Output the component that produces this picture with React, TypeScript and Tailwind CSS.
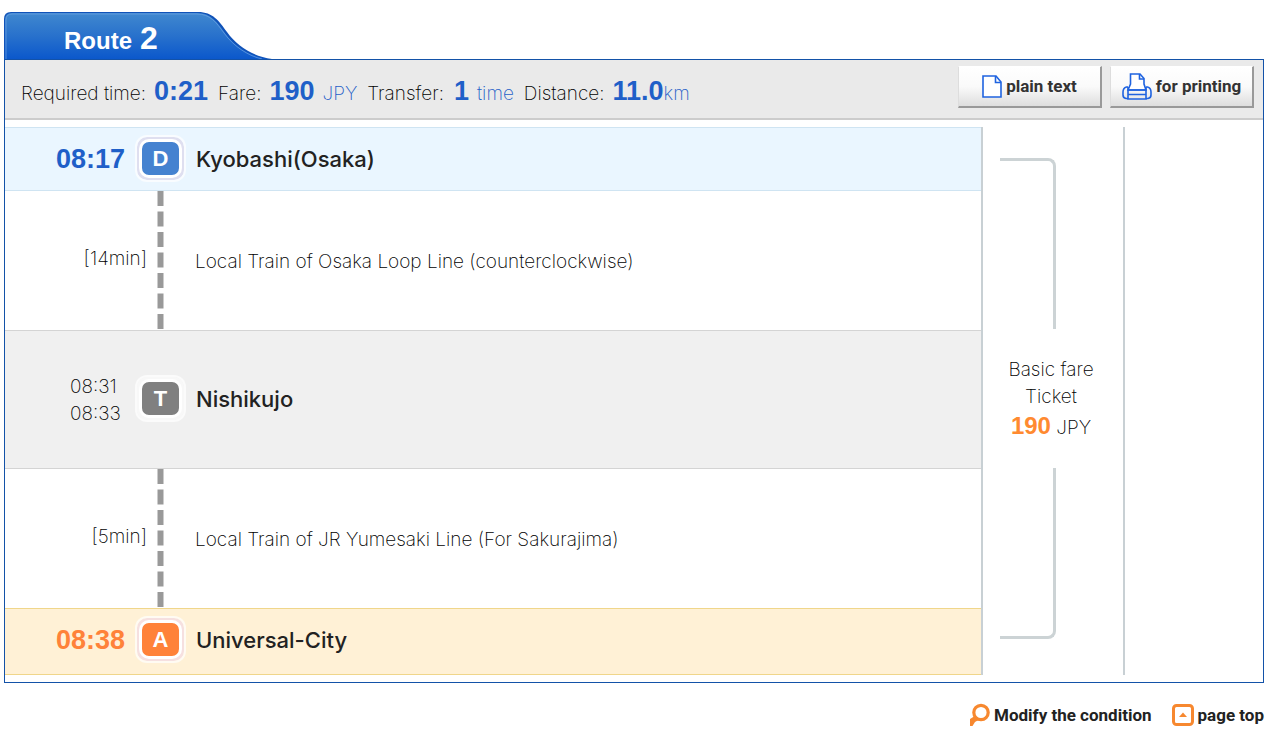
import type { ReactNode } from "react";

function RouteTab() {
  return (
    <div className="relative h-[47px] w-[268px]">
      <svg viewBox="0 0 268 47" className="absolute inset-0 h-full w-full" aria-hidden="true">
        <defs>
          <linearGradient id="tab" x1="0" y1="0" x2="0" y2="1">
            <stop offset="0" stopColor="#4088cf" />
            <stop offset="0.5" stopColor="#2871cc" />
            <stop offset="1" stopColor="#0b58cc" />
          </linearGradient>
        </defs>
        <path
          d="M0 47V7Q0 0 7 0H194C209 0 215 9 223 20C233 34 248 44 268 47Z"
          fill="#1052b8"
        />
        <path
          d="M1 47V8Q1 1 8 1H193C207 1 213 10 221 21C231 35 246 44 263 47Z"
          fill="url(#tab)"
        />
        <path
          d="M2 47V8Q2 2 8 2H193C206 2 212 10 220 21C230 35 245 44 258 47"
          fill="none"
          stroke="#6da4e4"
          strokeOpacity="0.7"
        />
      </svg>
      <h2 className="relative flex items-baseline gap-2 pt-2 pl-[60px] font-['Liberation_Sans',sans-serif] text-2xl leading-[36px] font-bold text-white">
        Route <span className="text-[32px]">2</span>
      </h2>
    </div>
  );
}

function PageIcon() {
  return (
    <svg width="20" height="23" viewBox="0 0 20 23" fill="none" aria-hidden="true">
      <path d="M1 1H14L19 7V22H1Z" fill="#fff" stroke="#1f63e0" strokeWidth="1.6" />
      <path d="M13.5 1V7.5H19" stroke="#1f63e0" strokeWidth="1.6" />
    </svg>
  );
}

function PrinterIcon() {
  return (
    <svg width="30" height="27" viewBox="0 0 30 27" fill="none" stroke="#1f63e0" strokeWidth="1.6" aria-hidden="true">
      <path d="M6 17L8.5 11V1H18L22 5.5V11L24 17Z" fill="#fff" />
      <path d="M17.5 1V6H22" />
      <path d="M6 14H4.5Q1 15 1 19V22Q1 25 4 25.5H6M24 14H25.5Q29 15 29 19V22Q29 25 26 25.5H24" />
      <path d="M6 14V26H24V14M6 17H24M6 21.5H24" />
    </svg>
  );
}

function SearchIcon() {
  return (
    <svg width="20" height="24" viewBox="0 0 20 24" fill="none" aria-hidden="true">
      <circle cx="11" cy="9.5" r="7.2" stroke="#f7882f" strokeWidth="3.2" />
      <path d="M0 16L4 13.5L8.5 17L5 19L2.5 23H0Z" fill="#f7882f" />
    </svg>
  );
}

function TopIcon() {
  return (
    <svg width="22" height="22" viewBox="0 0 22 22" fill="none" aria-hidden="true">
      <rect x="1.5" y="1.5" width="19" height="19" rx="3" stroke="#f7882f" strokeWidth="3" />
      <path d="M7 13L11 8.5L15 13Z" fill="#f7882f" />
    </svg>
  );
}

function ToolButton({ icon, children }: { icon: ReactNode; children: ReactNode }) {
  return (
    <button
      type="button"
      className="flex h-[42px] w-36 items-center justify-center gap-1 border border-r-2 border-b-2 border-t-white border-r-[#999] border-b-[#999] border-l-[#ddd] bg-linear-to-b from-white via-[#fafafa] to-[#dedede] font-['Roboto',sans-serif] text-[17px] font-bold whitespace-nowrap text-[#333]"
    >
      {icon}
      {children}
    </button>
  );
}

function Num({ children }: { children: ReactNode }) {
  return (
    <b className="font-['Liberation_Sans',sans-serif] text-[27px] font-bold text-[#1f5fc8]">{children}</b>
  );
}

// outer white edge, tinted halo, white edge, tile
function Badge({ letter, color, halo }: { letter: string; color: string; halo: string }) {
  return (
    <span className={`rounded-xl border-2 border-white/70 bg-clip-padding p-0.5 ${halo}`}>
      <span
        className={`flex h-[39px] w-[43px] items-center justify-center rounded-[10px] border-3 border-white font-['Liberation_Sans',sans-serif] text-[22px] font-bold text-white ${color}`}
      >
        {letter}
      </span>
    </span>
  );
}

interface StationProps {
  time: ReactNode;
  name: string;
  badge: ReactNode;
  className: string;
}

function Station({ time, name, badge, className }: StationProps) {
  return (
    <li className={`flex items-center ${className}`}>
      <div className="w-[120px] text-right">{time}</div>
      <div className="flex w-[71px] justify-center pb-0.5">{badge}</div>
      <div className="text-[22px] font-medium text-[#222]">{name}</div>
    </li>
  );
}

function Leg({ duration, line }: { duration: string; line: string }) {
  return (
    <li className="flex h-[139px] items-center">
      <div className="w-[142px] pb-0.5 text-right">{duration}</div>
      <svg width="26" height="139" aria-hidden="true">
        <path d="M13.5 0V138" stroke="#999" strokeWidth="6" strokeDasharray="15 5.5" />
      </svg>
      <div className="pt-1 pl-[22px]">{line}</div>
    </li>
  );
}

export default function App() {
  return (
    <main className="bg-white pt-3 pr-4 pl-1 font-['Inter',sans-serif] text-[19px] font-extralight text-black">
      <RouteTab />

      <section className="border border-[#1352a8] pb-[7px]">
        {/* Summary bar */}
        <div className="flex h-[60px] items-center justify-between border-b-2 border-[#ccc] bg-[#eaeaea] pr-[9px] pl-4">
          <p className="flex items-baseline pt-1 whitespace-nowrap">
            <span className="mr-2">Required time:</span>
            <Num>0:21</Num>
            <span className="mr-2 ml-2.5">Fare:</span>
            <Num>190</Num>
            <span className="mr-2.5 ml-2 text-[#1f5fc8]">JPY</span>
            <span className="mr-2.5">Transfer:</span>
            <Num>1</Num>
            <span className="mr-2.5 ml-2 text-[#1f5fc8]">time</span>
            <span className="mr-2">Distance:</span>
            <Num>11.0</Num>
            <span className="text-[#1f5fc8]">km</span>
          </p>
          <div className="flex gap-2 pb-1">
            <ToolButton icon={<PageIcon />}>plain text</ToolButton>
            <ToolButton icon={<PrinterIcon />}>for printing</ToolButton>
          </div>
        </div>

        <div className="mt-[7px] flex">
          <ol className="flex-1">
            <Station
              time={<span className="font-['Liberation_Sans',sans-serif] text-[27px] font-bold text-[#1f5fc8]">08:17</span>}
              name="Kyobashi(Osaka)"
              badge={<Badge letter="D" color="bg-[#4582d0]" halo="bg-[#dfdff0]" />}
              className="h-16 border-y border-[#cfe4f2] bg-[#eaf6ff]"
            />
            <Leg duration="[14min]" line="Local Train of Osaka Loop Line (counterclockwise)" />
            <Station
              time={<div className="pl-[65px] text-left leading-[27px]">08:31<br />08:33</div>}
              name="Nishikujo"
              badge={<Badge letter="T" color="bg-[#808080]" halo="bg-[#f8f8f8]" />}
              className="h-[139px] border-y border-[#d4d4d4] bg-[#f0f0f0]"
            />
            <Leg duration="[5min]" line="Local Train of JR Yumesaki Line (For Sakurajima)" />
            <Station
              time={<span className="font-['Liberation_Sans',sans-serif] text-[27px] font-bold text-[#ff8239]">08:38</span>}
              name="Universal-City"
              badge={<Badge letter="A" color="bg-[#ff8239]" halo="bg-[#f6e0e0]" />}
              className="h-[67px] border-y border-[#f0d68a] bg-[#fff1d6] pb-0.5"
            />
          </ol>

          {/* Fare column */}
          <div className="flex w-[144px] flex-col border-x-2 border-[#c8d0d4] pt-[31px] pb-9">
            <div className="ml-[17px] w-14 flex-1 rounded-tr-lg border-t-3 border-r-3 border-[#ccd3d5]" />
            <div className="flex h-[139px] flex-col items-center justify-center pt-0.5 pr-1 leading-[27px]">
              <span>Basic fare</span>
              <span>Ticket</span>
              <span className="leading-[32px]">
                <b className="font-['Liberation_Sans',sans-serif] text-2xl font-bold text-[#ff8a30]">190</b> JPY
              </span>
            </div>
            <div className="ml-[17px] w-14 flex-1 rounded-br-lg border-r-3 border-b-3 border-[#ccd3d5]" />
          </div>
          <div className="w-[138px]" />
        </div>
      </section>

      <nav className="mt-5 flex items-center justify-end gap-5 font-['Roboto',sans-serif] text-[17px] leading-6 font-bold whitespace-nowrap text-[#222]">
        <a href="#condition" className="flex items-center gap-1">
          <SearchIcon />
          Modify the condition
        </a>
        <a href="#top" className="flex items-center gap-1">
          <TopIcon />
          page top
        </a>
      </nav>
    </main>
  );
}
